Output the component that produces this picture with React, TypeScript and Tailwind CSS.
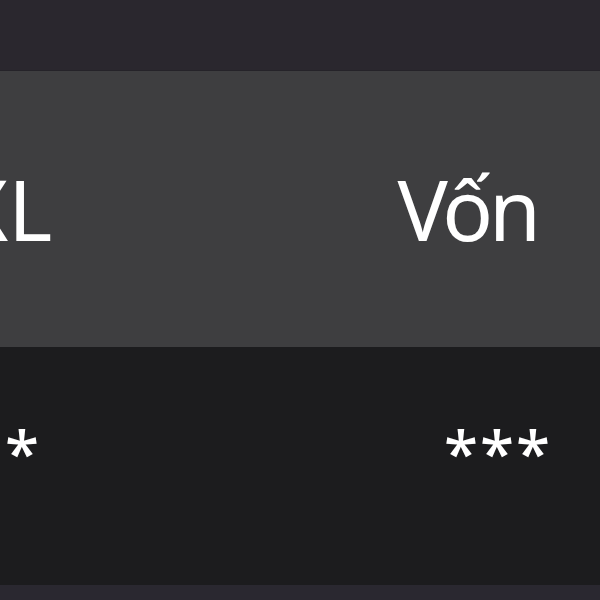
import React from 'react';

const rows = [{ kl: '*', von: '***' }];

export default function App() {
  return (
    <div className="w-[600px] h-[600px] overflow-hidden bg-[#1c1c1e] text-white font-['Noto_Sans',sans-serif] flex flex-col">
      <div className="h-[71px] bg-[#2a272e] border-b border-[#252329]" />
      <div className="h-[276px] bg-[#3e3e40] flex items-center justify-between">
        <span className="-ml-[41px] text-[84px] leading-none">XL</span>
        <span className="pr-[63px] text-[84px] leading-none tracking-[-4px]">Vốn</span>
      </div>
      {rows.map((row) => (
        <div key={row.von} className="h-[238px] bg-[#1c1c1e] flex items-center justify-between pb-[28px]">
          <span className="pl-[5px] text-[62px] leading-none font-medium">{row.kl}</span>
          <span className="pr-[48px] text-[62px] leading-none font-medium tracking-[2px]">{row.von}</span>
        </div>
      ))}
      <div className="flex-1 bg-[#2a2830]" />
    </div>
  );
}
